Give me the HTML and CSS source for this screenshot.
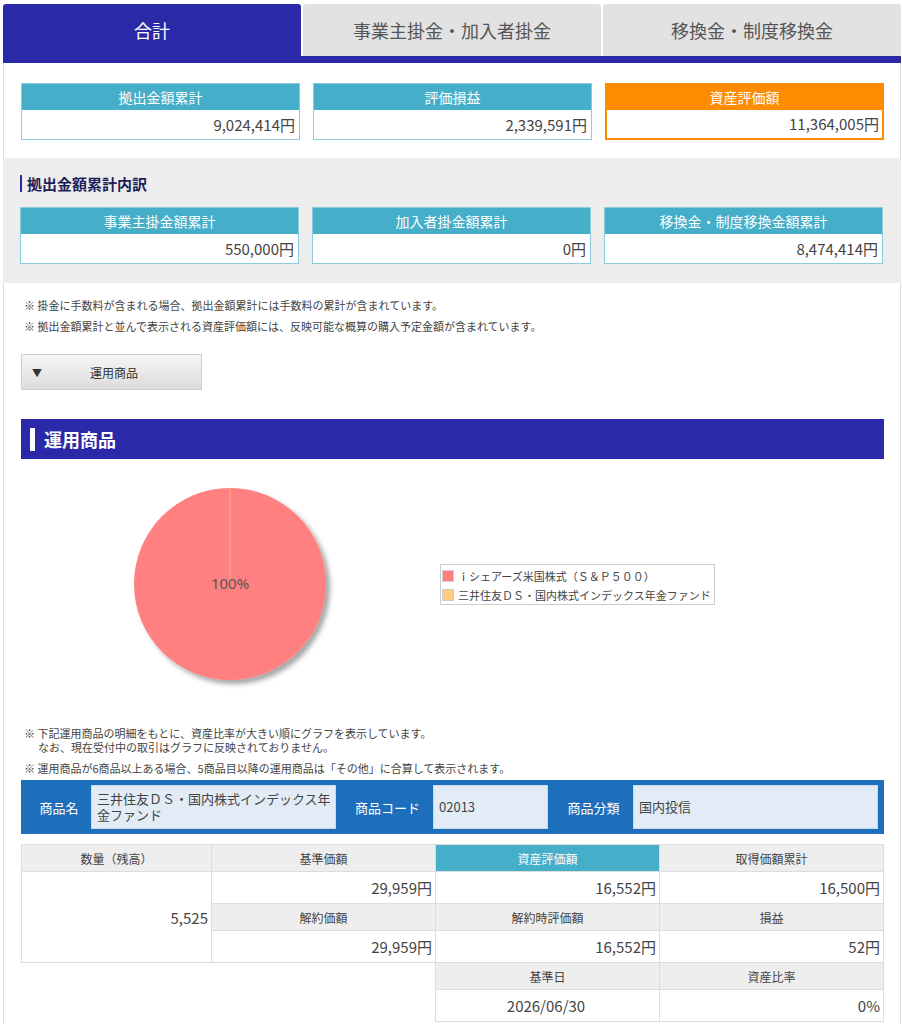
FILE: index.html
```html
<!DOCTYPE html>
<html lang="ja">
<head>
    <meta charset="UTF-8">
    <meta name="viewport" content="width=device-width, initial-scale=1.0">
    <title>資産状況</title>
    <link rel="stylesheet" href="styles.css">
</head>
<body>
    <div class="page">
        <!-- Tabs -->
        <div class="tabs">
            <div class="tab active">合計</div>
            <div class="tab">事業主掛金・加入者掛金</div>
            <div class="tab">移換金・制度移換金</div>
        </div>
        <div class="tab-line"></div>

        <div class="content">
            <div class="summary">
                <div class="sum-box">
                    <div class="sum-head">拠出金額累計</div>
                    <div class="sum-value">9,024,414円</div>
                </div>
                <div class="sum-box">
                    <div class="sum-head">評価損益</div>
                    <div class="sum-value">2,339,591円</div>
                </div>
                <div class="sum-box orange">
                    <div class="sum-head">資産評価額</div>
                    <div class="sum-value">11,364,005円</div>
                </div>
            </div>

            <div class="breakdown">
                <h3 class="sub-title">拠出金額累計内訳</h3>
                <div class="summary-grid">
                    <div class="sum-box">
                        <div class="sum-head">事業主掛金額累計</div>
                        <div class="sum-value">550,000円</div>
                    </div>
                    <div class="sum-box">
                        <div class="sum-head">加入者掛金額累計</div>
                        <div class="sum-value">0円</div>
                    </div>
                    <div class="sum-box">
                        <div class="sum-head">移換金・制度移換金額累計</div>
                        <div class="sum-value">8,474,414円</div>
                    </div>
                </div>
            </div>

            <div class="notes">
                <p>※ 掛金に手数料が含まれる場合、拠出金額累計には手数料の累計が含まれています。</p>
                <p>※ 拠出金額累計と並んで表示される資産評価額には、反映可能な概算の購入予定金額が含まれています。</p>
            </div>

            <button class="toggle-btn"><span class="arrow">▼</span>運用商品</button>

            <h2 class="section-title">運用商品</h2>

            <div class="chart-area">
                <div class="pie-wrap">
                    <svg width="212" height="212" viewBox="0 0 212 212">
                        <defs>
                            <filter id="shadow" x="-10%" y="-10%" width="130%" height="130%">
                                <feDropShadow dx="4" dy="4" stdDeviation="2.5" flood-color="#000" flood-opacity="0.35"/>
                            </filter>
                        </defs>
                        <circle cx="100" cy="100" r="96" fill="#ff8080" filter="url(#shadow)"/>
                        <line x1="100" y1="4" x2="100" y2="100" stroke="#ffc680" stroke-width="0.8"/>
                        <text x="100" y="105" text-anchor="middle" class="pie-label">100%</text>
                    </svg>
                </div>
                <div class="legend">
                    <div class="legend-item"><span class="swatch red"></span>ｉシェアーズ米国株式（Ｓ＆Ｐ５００）</div>
                    <div class="legend-item"><span class="swatch yellow"></span>三井住友ＤＳ・国内株式インデックス年金ファンド</div>
                </div>
            </div>

            <div class="notes small">
                <p>※ 下記運用商品の明細をもとに、資産比率が大きい順にグラフを表示しています。<br><span class="indent">なお、現在受付中の取引はグラフに反映されておりません。</span></p>
                <p>※ 運用商品が6商品以上ある場合、5商品目以降の運用商品は「その他」に合算して表示されます。</p>
            </div>

            <div class="product-bar">
                <div class="pb-label name">商品名</div>
                <div class="pb-box name">三井住友ＤＳ・国内株式インデックス年金ファンド</div>
                <div class="pb-label code">商品コード</div>
                <div class="pb-box code">02013</div>
                <div class="pb-label kind">商品分類</div>
                <div class="pb-box kind">国内投信</div>
            </div>

            <div class="detail">
                <div class="th c1">数量（残高）</div>
                <div class="th">基準価額</div>
                <div class="th hl">資産評価額</div>
                <div class="th">取得価額累計</div>

                <div class="td qty">5,525</div>
                <div class="td">29,959円</div>
                <div class="td">16,552円</div>
                <div class="td">16,500円</div>

                <div class="th">解約価額</div>
                <div class="th">解約時評価額</div>
                <div class="th">損益</div>

                <div class="td">29,959円</div>
                <div class="td">16,552円</div>
                <div class="td">52円</div>

                <div class="empty"></div>
                <div class="th">基準日</div>
                <div class="th">資産比率</div>

                <div class="empty"></div>
                <div class="td center">2026/06/30</div>
                <div class="td">0%</div>
            </div>
        </div>
    </div>
</body>
</html>
```

FILE: styles.css
```css
body {
    margin: 0;
    padding: 0;
    font-family: "Noto Sans CJK JP", "Noto Sans", sans-serif;
    color: #444;
    background-color: white;
}
.page {
    width: 898px;
    margin: 4px 0 0 3px;
}
.tabs {
    display: flex;
    gap: 2px;
}
.tab {
    flex: 1;
    height: 52px;
    line-height: 52px;
    text-align: center;
    font-size: 18px;
    color: #555;
    background-color: #e2e2e2;
    border-radius: 3px 3px 0 0;
}
.tab.active {
    background-color: #2a2aa8;
    color: white;
}
.tab-line {
    height: 7px;
    background-color: #2a2aa8;
}
.content {
    border-left: 1px solid #ddd;
    border-right: 1px solid #ddd;
    padding-bottom: 20px;
}
.summary, .summary-grid {
    display: grid;
    grid-template-columns: repeat(3, 279px);
    gap: 13px;
    padding: 20px 0 18px 17px;
}
.summary-grid {
    padding: 0;
}
.sum-box {
    border: 1px solid #8ccbdd;
    background-color: #fff;
}
.sum-head {
    background-color: #45aec9;
    color: white;
    text-align: center;
    font-size: 14px;
    height: 26px;
    line-height: 26px;
}
.sum-value {
    text-align: right;
    font-size: 15px;
    height: 29px;
    line-height: 29px;
    padding-right: 4px;
    color: #444;
}
.sum-box.orange {
    border: 2px solid #ff8c00;
    border-top: 1px solid #ff8c00;
}
.sum-box.orange .sum-head {
    background-color: #ff8c00;
}
.sum-box.orange .sum-value {
    height: 27px;
    line-height: 27px;
    padding-right: 3px;
}
.breakdown {
    background-color: #ededed;
    padding: 17px 0 19px 17px;
    margin: 0 -1px;
}
.sub-title {
    margin: 0 0 15px 0;
    font-size: 15px;
    font-weight: bold;
    color: #1e1e5a;
    border-left: 2px solid #2a2aa8;
    padding-left: 5px;
    line-height: 17px;
}
.notes {
    padding: 14px 0 0 20px;
    font-size: 11px;
    color: #444;
}
.notes p {
    margin: 0 0 5px 0;
    line-height: 16px;
}
.notes .indent {
    padding-left: 14px;
}
.toggle-btn {
    display: flex;
    align-items: center;
    margin: 20px 0 0 17px;
    width: 181px;
    height: 36px;
    border: 1px solid #d0d0d0;
    background: linear-gradient(#f6f6f6, #dcdcdc);
    font-family: inherit;
    font-size: 12px;
    color: #333;
    padding: 0 0 0 10px;
}
.toggle-btn .arrow {
    font-size: 10px;
    width: 58px;
    text-align: left;
}
.section-title {
    margin: 29px 0 0 17px;
    width: 863px;
    height: 40px;
    line-height: 40px;
    background-color: #2a2aa8;
    color: white;
    font-size: 18px;
    font-weight: bold;
    box-sizing: border-box;
    padding-left: 23px;
    position: relative;
}
.section-title::before {
    content: "";
    position: absolute;
    left: 9px;
    top: 9px;
    width: 5px;
    height: 23px;
    background-color: white;
}
.chart-area {
    display: flex;
    align-items: flex-start;
    height: 256px;
    padding-left: 126px;
}
.pie-wrap {
    width: 212px;
    height: 212px;
    margin-top: 25px;
}
.pie-label {
    font-size: 15px;
    fill: #555;
    font-family: "Noto Sans", sans-serif;
}
.legend {
    margin-left: 98px;
    margin-top: 105px;
    border: 1px solid #ccc;
    padding: 1px 3px 0 1px;
    font-size: 11px;
    color: #444;
}
.legend-item {
    display: flex;
    align-items: center;
    height: 19px;
}
.swatch {
    display: inline-block;
    width: 10px;
    height: 10px;
    border: 1px solid #ccc;
    margin-right: 4px;
}
.swatch.red {
    background-color: #ff8080;
}
.swatch.yellow {
    background-color: #ffcc80;
}
.notes.small {
    padding-top: 11px;
}
.notes.small p {
    line-height: 14px;
    margin-bottom: 7px;
}
.notes.small p:last-child {
    margin-bottom: 5px;
}
.product-bar {
    display: flex;
    align-items: center;
    margin: 0 0 0 17px;
    width: 863px;
    height: 54px;
    box-sizing: border-box;
    background-color: #1e6fbb;
    padding: 5px 6px 5px 0;
}
.pb-label {
    color: white;
    font-size: 13px;
    text-align: center;
    box-sizing: border-box;
    padding-left: 6px;
}
.pb-label.name { width: 70px; }
.pb-label.code { width: 97px; }
.pb-label.kind { width: 85px; }
.pb-box {
    background-color: #e1ecf7;
    height: 44px;
    box-sizing: border-box;
    border: 1px solid #c8d9ec;
    font-size: 13px;
    color: #444;
    display: flex;
    align-items: center;
    padding: 0 2px 0 5px;
    line-height: 16px;
    word-break: break-all;
}
.pb-box.name { width: 245px; }
.pb-box.code { width: 115px; }
.pb-box.kind { flex: 1; }
.detail {
    display: grid;
    grid-template-columns: 190px 224px 224px 224px;
    grid-template-rows: 27px 32px 27px 32px 27px 32px;
    margin: 10px 0 0 17px;
    width: 863px;
    font-size: 15px;
}
.th {
    background-color: #eeeeee;
    font-size: 12px;
    color: #444;
    text-align: center;
    line-height: 27px;
    border: 1px solid #ddd;
    margin: 0 -1px -1px 0;
}
.th.hl {
    background-color: #45aec9;
    color: white;
}
.td {
    text-align: right;
    line-height: 32px;
    padding-right: 3px;
    border: 1px solid #ddd;
    margin: 0 -1px -1px 0;
    color: #444;
}
.td.center {
    text-align: center;
}
.td.qty {
    grid-row: 2 / span 3;
    line-height: normal;
    display: flex;
    align-items: center;
    justify-content: flex-end;
}
.detail > .th:nth-child(5) {
    grid-column: 2;
}
.empty {
    grid-column: 1 / span 2;
}
```
